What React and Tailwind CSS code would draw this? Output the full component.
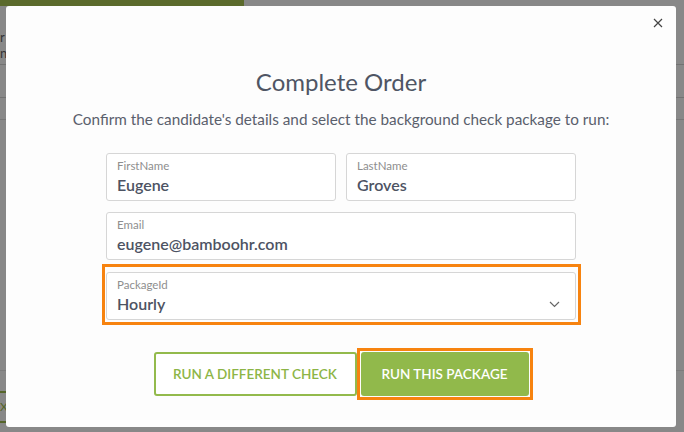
import React from "react";

function Field({ label, value, chevron }) {
  return (
    <div className="relative flex h-[48px] flex-1 flex-col justify-center rounded-[3px] border border-[#d6d6d6] bg-white pl-[10px] pr-[12px]">
      <div className="text-[11.5px] leading-[14px] text-[#8e8e8e]">{label}</div>
      <div className="mt-[1px] flex items-center justify-between text-[16px] font-semibold leading-[22px] text-[#4d5363]">
        <span>{value}</span>
        {chevron && (
          <svg width="11" height="7" viewBox="0 0 11 7" className="mr-[3px] mt-[2px]">
            <path d="M1 1l4.5 4.5L10 1" fill="none" stroke="#666" strokeWidth="1.2" />
          </svg>
        )}
      </div>
    </div>
  );
}

export default function App() {
  return (
    <div
      className="relative h-[432px] w-[684px] overflow-hidden bg-[#888888]"
      style={{ fontFamily: "Lato, 'Open Sans', sans-serif" }}
    >
      {/* background page */}
      <div className="flex flex-col">
        <div className="h-[6px] w-[244px] bg-[#5b6a2c]" />
        <div className="h-[23px]" />
        <div className="text-[13px] leading-[16px] text-[#333]">r</div>
        <div className="text-[13px] leading-[16px] text-[#333]">n</div>
        <div className="h-[4px] border-b border-[#727272]" />
        <div className="h-[33px] border-b border-[#727272]" />
        <div className="h-[22px] border-b border-[#777]" />
        <div className="h-[251px] border-b border-[#7c7c7c]" />
        <div className="h-[20px]" />
        <div className="h-[2px] w-[6px] bg-[#55652a]" />
        <div className="h-[4px]" />
        <div className="text-[12px] leading-[20px] text-[#55652a]">X</div>
        <div className="h-[4px]" />
        <div className="h-[2px] w-[6px] bg-[#55652a]" />
      </div>

      {/* modal */}
      <div className="absolute left-[6px] top-[6px] flex h-[421px] w-[670px] flex-col items-center rounded-[3px] bg-[#fdfdfd]">
        <button className="absolute right-[13px] top-[11px] flex h-[11px] w-[11px] items-center justify-center">
          <svg width="10" height="10" viewBox="0 0 10 10">
            <path d="M1 1l8 8M9 1l-8 8" stroke="#444" strokeWidth="1.2" />
          </svg>
        </button>

        <h1 className="mt-[60px] text-[24px] leading-[32px] text-[#4f5564]">Complete Order</h1>
        <p className="mt-[11px] text-[15.3px] leading-[20px] text-[#5a606c]">
          Confirm the candidate's details and select the background check package to run:
        </p>

        <div className="mt-[24px] flex w-[470px] flex-col">
          <div className="flex gap-[10px]">
            <Field label="FirstName" value="Eugene" />
            <Field label="LastName" value="Groves" />
          </div>
          <div className="mt-[11px] flex">
            <Field label="Email" value="eugene@bamboohr.com" />
          </div>
          <div className="-ml-[4px] -mr-[5px] mt-[4px] flex border-[3px] border-[#f7830f] pb-[1px] pl-[1px] pr-[2px] pt-[5px]">
            <div className="flex h-[49px] flex-1">
              <Field label="PackageId" value="Hourly" chevron />
            </div>
          </div>
        </div>

        <div className="mt-[23px] flex items-center pl-[4px]">
          <button className="flex h-[44px] w-[203px] items-center justify-center rounded-[3px] border-2 border-[#93ba4c] bg-white text-[13.5px] font-semibold text-[#8db546]">
            RUN A DIFFERENT CHECK
          </button>
          <div className="border-[3px] border-[#f7830f] p-[1px]">
            <button className="flex h-[44px] w-[168px] items-center justify-center rounded-[3px] bg-[#91b94b] text-[13.5px] font-semibold text-white">
              RUN THIS PACKAGE
            </button>
          </div>
        </div>
      </div>
    </div>
  );
}
